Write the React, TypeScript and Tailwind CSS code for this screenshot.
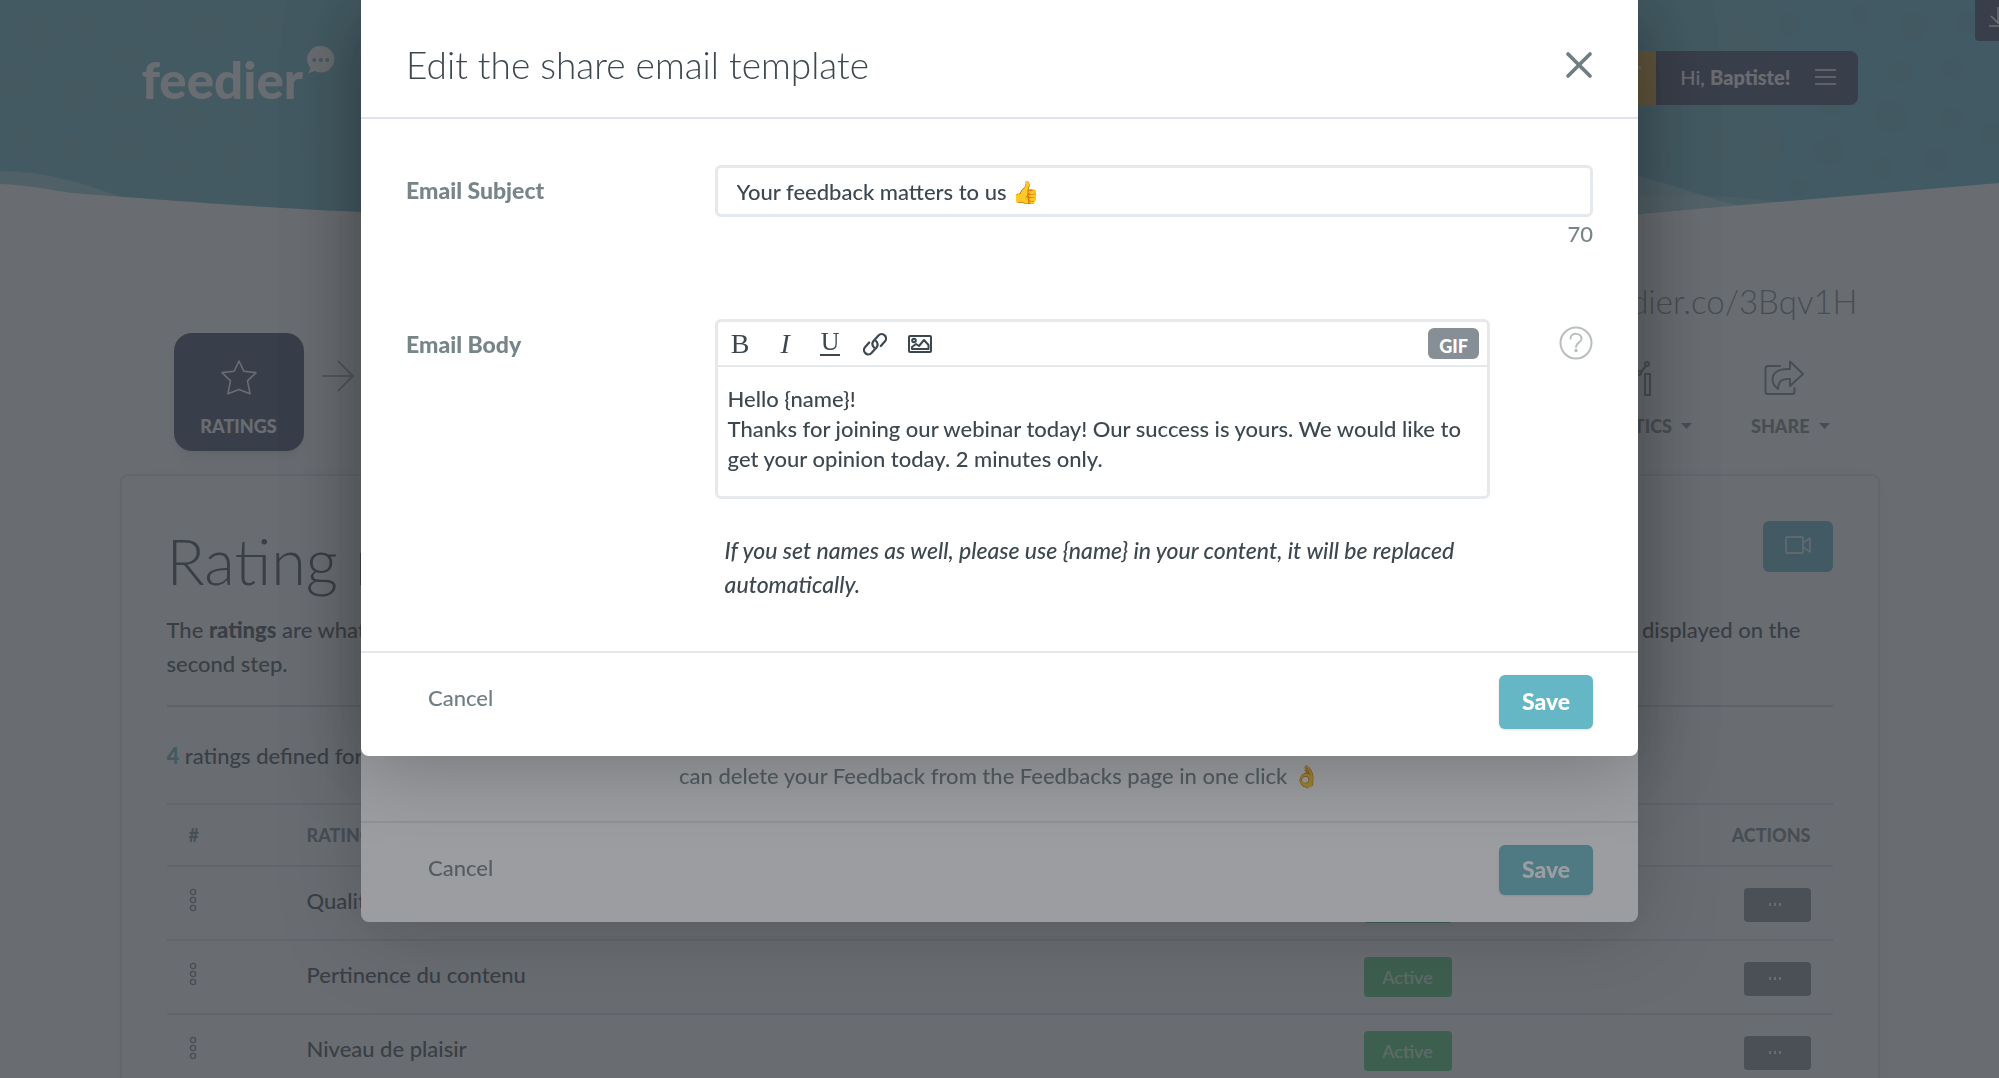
import { useState } from 'react';
import type { ReactNode } from 'react';
import { X } from 'lucide-react';

interface Rating {
  id: number;
  name: string;
}

const ratings: Rating[] = [
  { id: 1, name: 'Qualité de la présentation' },
  { id: 2, name: 'Pertinence du contenu' },
  { id: 3, name: 'Niveau de plaisir' },
  { id: 4, name: 'Organisation' },
];

// faint bubbles scattered over the header
const bubbles = [
  [38, 36, 16], [86, 26, 12], [157, 15, 10], [210, 26, 15], [270, 24, 11], [127, 58, 12],
  [14, 84, 14], [76, 92, 16], [127, 105, 12], [187, 118, 16], [247, 118, 12], [20, 143, 11],
  [72, 146, 12], [126, 150, 15], [180, 166, 11], [234, 158, 12], [305, 138, 14],
  [1742, 38, 14], [1788, 25, 12], [1859, 14, 10], [1914, 26, 14], [1968, 22, 12], [1900, 72, 12],
  [1953, 68, 11], [1830, 104, 12], [1891, 117, 17], [1951, 118, 12], [1773, 146, 12], [1829, 151, 15],
  [1882, 168, 11], [1937, 159, 12], [1720, 143, 12], [1799, 188, 10], [1660, 160, 11], [1992, 134, 12],
];

function HeaderBackground() {
  return (
    <svg
      className="absolute inset-x-0 top-0 h-[216px] w-full"
      viewBox="0 0 1999 216"
      preserveAspectRatio="none"
      aria-hidden="true"
    >
      <rect width="1999" height="216" fill="#66b7c5" />
      {bubbles.map(([x, y, r]) => (
        <circle key={`${x}-${y}`} cx={x} cy={y} r={r} fill="#8a9a90" opacity="0.1" />
      ))}
      <path d="M0 171C45 171 82 183 124 198L0 200Z" fill="#fff" opacity="0.3" />
      <path d="M1600 170C1660 176 1700 198 1742 206L1600 216Z" fill="#fff" opacity="0.3" />
      <path d="M1600 200C1680 192 1740 196 1788 203L1600 216Z" fill="#fff" opacity="0.15" />
      <path d="M0 184C30 185 50 190 72 193C140 198 230 206 360 212L1000 216L1638 214L1999 183V216H0Z" fill="#fff" />
    </svg>
  );
}

function Logo() {
  return (
    <a href="#home" className="flex items-start gap-1 text-white">
      <span className="pt-1 text-[51px] leading-[60px] font-black">feedier</span>
      <svg className="h-7 w-7" viewBox="0 0 28 28" fill="currentColor" aria-hidden="true">
        <path
          fillRule="evenodd"
          d="M14 0a13.6 13.2 0 1 1-6.300 25L1 27.500l2.600-5.500A13.400 13.200 0 0 1 14 0ZM7.300 12a2 2 0 1 0 0 4 2 2 0 0 0 0-4Zm6.500 0a2 2 0 1 0 0 4 2 2 0 0 0 0-4Zm6.500 0a2 2 0 1 0 0 4 2 2 0 0 0 0-4Z"
        />
      </svg>
    </a>
  );
}

function Caret() {
  return (
    <svg className="h-[6px] w-[11px]" viewBox="0 0 11 6" fill="currentColor" aria-hidden="true">
      <path d="M0 0h11L5.500 6z" />
    </svg>
  );
}

function Header() {
  return (
    <header className="flex h-[54px] items-center justify-between">
      <Logo />
      <div className="flex h-full overflow-hidden rounded-lg bg-[#3f4864]">
        <button type="button" aria-label="Upgrade" className="flex w-[54px] justify-center bg-[#dfa62c] pt-2 text-white">
          <svg className="h-5 w-7" viewBox="0 0 28 20" fill="none" stroke="currentColor" strokeWidth="2">
            <path d="M2 10L14 0l12 10M14 0v18" />
          </svg>
        </button>
        <button type="button" className="flex items-center gap-6 pr-[22px] pb-0.5 pl-6 text-xl text-white">
          <span>
            Hi, <strong className="font-black">Baptiste!</strong>
          </span>
          <svg className="h-[18px] w-[21px]" viewBox="0 0 21 18" stroke="currentColor" strokeWidth="1.6" aria-hidden="true">
            <path d="M0 2h21M0 9h21M0 16h21" />
          </svg>
        </button>
      </div>
    </header>
  );
}

function Steps() {
  return (
    <nav className="mt-2 flex h-[118px] items-stretch px-[22px] font-black text-[#778589] uppercase">
      <button
        type="button"
        className="ml-8 flex w-[130px] flex-col items-center rounded-[18px] bg-[#3b4864] pt-[27px] text-lg leading-6 text-white uppercase shadow-lg"
      >
        <svg className="h-9 w-9" viewBox="0 0 36 36" fill="none" stroke="currentColor" strokeWidth="1.6" strokeLinejoin="round" aria-hidden="true">
          <path d="M18 1l4.800 10.200L35 12.600l-8.500 8.200 2.600 13L18 29.500 6.900 33.800l2.600-13L1 12.600l12.200-1.400z" />
        </svg>
        <span className="mt-[18px]">Ratings</span>
      </button>
      <svg className="mt-[27px] ml-[18px] h-8 w-8 text-[#a5abae]" viewBox="0 0 32 32" fill="none" stroke="currentColor" strokeWidth="2" aria-hidden="true">
        <path d="M0 16h31M16 1l15 15-15 15" />
      </svg>
      <button type="button" className="mr-[59px] ml-auto flex flex-col items-center pt-[27px] text-lg leading-6 uppercase">
        <svg className="h-9 w-9" viewBox="0 0 36 36" fill="none" stroke="currentColor" strokeWidth="2" aria-hidden="true">
          <path d="M2 26h5v9H2zM16 23h5v12h-5zM29 14h5v21h-5zM5 19l9-8M18 11l4 3M24 13l6-7" />
          <circle cx="3" cy="21" r="2" />
          <circle cx="16" cy="10" r="2" />
          <circle cx="23" cy="13" r="2" />
          <circle cx="31" cy="4" r="2" />
        </svg>
        <span className="mt-[18px] flex items-center gap-[9px]">
          Analytics <Caret />
        </span>
      </button>
      <button type="button" className="mr-7 flex flex-col items-center pt-[27px] text-lg leading-6 uppercase">
        <svg className="mr-3 h-9 w-10" viewBox="0 0 40 36" fill="none" stroke="currentColor" strokeWidth="2" strokeLinejoin="round" strokeLinecap="round" aria-hidden="true">
          <path d="M16 6H4a2.500 2.500 0 0 0-2.500 2.500v23A2.500 2.500 0 0 0 4 34h24a2.500 2.500 0 0 0 2.500-2.500V28" />
          <path d="M26 9V1.500L39 14 26 26v-7c-7-.5-11.500 1-12 10-4-3-5.500-7-5.500-10C9 11 17 8.500 26 9z" />
        </svg>
        <span className="mt-[18px] flex items-center gap-[9px]">
          Share <Caret />
        </span>
      </button>
    </nav>
  );
}

function RatingsTable() {
  return (
    <table className="mt-7 w-full border-t-2 border-[#e3e6e9] text-left">
      <thead>
        <tr className="h-[62px] border-b-2 border-[#e3e6e9] text-lg text-[#778589] uppercase">
          <th className="w-[118px] px-[22px] font-bold">#</th>
          <th className="px-[22px] font-black">Rating</th>
          <th className="w-[300px] px-[22px] font-black">Status</th>
          <th className="w-[191px] px-[22px] text-right font-black">Actions</th>
        </tr>
      </thead>
      <tbody>
        {ratings.map((rating) => (
          <tr key={rating.id} className="h-[74px] border-b-2 border-[#e3e6e9]">
            <td className="px-[22px] pb-1.5">
              <svg className="h-6 w-2 text-[#778589]" viewBox="0 0 8 24" fill="none" stroke="currentColor" strokeWidth="1.4" aria-hidden="true">
                <circle cx="4" cy="4" r="2.600" />
                <circle cx="4" cy="12" r="2.600" />
                <circle cx="4" cy="20" r="2.600" />
              </svg>
            </td>
            <td className="px-[22px] pb-1.5">{rating.name}</td>
            <td className="px-[22px]">
              <span className="flex h-10 w-[88px] items-center justify-center rounded bg-[#4fcb78] text-lg text-white/80">
                Active
              </span>
            </td>
            <td className="px-[22px]">
              <button
                type="button"
                aria-label={`Actions for ${rating.name}`}
                className="mt-1 ml-auto flex h-[34px] w-[67px] justify-center rounded bg-[#868e96] pt-[15px] pr-[5px] text-white"
              >
                <svg className="h-[3px] w-3" viewBox="0 0 12 3" fill="currentColor" aria-hidden="true">
                  <path d="M0 0h2v3H0zM5 0h2v3H5zM10 0h2v3h-2z" />
                </svg>
              </button>
            </td>
          </tr>
        ))}
      </tbody>
    </table>
  );
}

function ModalFooter({ tall }: { tall?: boolean }) {
  return (
    <footer
      className={`${tall ? 'h-[105px]' : 'h-[101px]'} flex items-start justify-between border-t-2 border-[#e5e7ea] px-[45px] pt-[22px]`}
    >
      <button type="button" className="px-[22px] pt-1.5 leading-[34px] text-[#6f7e82]">
        Cancel
      </button>
      <button
        type="button"
        className={`${tall ? 'h-[54px]' : 'h-[50px]'} w-[94px] rounded-md bg-[#66b7c5] pb-0.5 text-[23px] font-black text-white shadow-sm`}
      >
        Save
      </button>
    </footer>
  );
}

function Modal({ label, children }: { label: string; children: ReactNode }) {
  return (
    <div className="fixed inset-0 overflow-hidden bg-[#373b41]/50">
      <section
        role="dialog"
        aria-label={label}
        className="mx-auto max-w-[1277px] rounded-b-lg bg-white shadow-[0_10px_80px_rgba(0,0,0,0.25)]"
      >
        {children}
      </section>
    </div>
  );
}

function ToolbarButton({ label, children }: { label: string; children: ReactNode }) {
  return (
    <button type="button" aria-label={label} className="flex h-8 w-[45px] items-center justify-center">
      {children}
    </button>
  );
}

function Toolbar() {
  return (
    <div className="flex h-[45px] items-center border-b-2 border-[#e5e9ec] pr-2 font-['Liberation_Serif',serif] text-[28px] leading-8">
      <ToolbarButton label="Bold">B</ToolbarButton>
      <ToolbarButton label="Italic">
        <span className="italic">I</span>
      </ToolbarButton>
      <ToolbarButton label="Underline">
        <span className="h-6 w-5 border-b-2 border-current text-[26px] leading-5">U</span>
      </ToolbarButton>
      <ToolbarButton label="Link">
        <svg className="h-6 w-6" viewBox="0 0 24 24" fill="none" stroke="currentColor" strokeWidth="2.2" strokeLinecap="round">
          <path d="M11 15.500a5 5 0 0 1-.5-6.500l5-5.500a4.300 4.300 0 0 1 6.300 6l-4 4.500" />
          <path d="M13 9a5 5 0 0 1 .5 6.500l-5 5.500a4.300 4.300 0 0 1-6.300-6l4-4.500" />
        </svg>
      </ToolbarButton>
      <ToolbarButton label="Image">
        <svg className="h-[18px] w-6" viewBox="0 0 24 18" fill="none" stroke="currentColor" strokeWidth="2" strokeLinejoin="round">
          <rect x="1" y="1" width="22" height="16" rx="1" />
          <circle cx="6" cy="5.500" r="1.800" />
          <path d="M4 14v-2l4-3 3 2 5-6 4.500 5v4z" />
        </svg>
      </ToolbarButton>
      <button
        type="button"
        className="ml-auto h-[31px] w-[51px] rounded-md bg-[#868e96] pt-1 font-[Lato,sans-serif] text-lg leading-6 font-black text-white"
      >
        GIF
      </button>
    </div>
  );
}

export default function App() {
  const [subject, setSubject] = useState('Your feedback matters to us 👍');
  const [body, setBody] = useState(
    'Hello {name}!\nThanks for joining our webinar today! Our success is yours. We would like to get your opinion today. 2 minutes only.'
  );

  return (
    <div className="relative h-screen overflow-hidden bg-white font-[Lato,sans-serif] text-[22px] font-medium text-[#3d484e]">
      <HeaderBackground />
      <button
        type="button"
        aria-label="Download"
        className="absolute top-0 right-0 flex h-[41px] w-6 overflow-hidden rounded-bl bg-[#3f4864] pt-1.5 pl-3.5 text-white"
      >
        <svg className="h-[22px] w-5 shrink-0" viewBox="0 0 20 22" fill="none" stroke="currentColor" strokeWidth="1.600" aria-hidden="true">
          <path d="M9 1v16M2 10l7 7 7-7M0 20h18" />
        </svg>
      </button>

      <main className="relative mx-auto max-w-[1760px] pt-[51px]">
        <div className="px-[22px]">
          <Header />
          <a href="#survey" className="mt-[172px] block text-right text-[33px] leading-[48px] font-light text-[#778589]">
            https://feedier.co/3Bqv1H
          </a>
        </div>
        <Steps />

        <section className="mt-[23px] rounded-lg border-2 border-[#e5e9ec] px-[45px] pt-[45px] shadow-[0_0_30px_rgba(0,0,0,0.04)]">
          <div className="flex items-start justify-between">
            <h1 className="text-[63px] leading-[80px] font-light">Rating management</h1>
            <button
              type="button"
              aria-label="Watch the video"
              className="flex h-[51px] w-[70px] items-center justify-center rounded-md bg-[#66b7c5] pb-1 text-white"
            >
              <svg className="h-[18px] w-[26px]" viewBox="0 0 26 18" fill="none" stroke="currentColor" strokeWidth="1.400" strokeLinejoin="round" aria-hidden="true">
                <rect x="1" y="1" width="17" height="16" rx="1" />
                <path d="M18 7l7-5v14l-7-5" />
              </svg>
            </button>
          </div>
          <p className="mt-3 leading-[34px]">
            <span className="flex justify-between pr-8">
              <span>
                The <strong className="font-black">ratings</strong> are what people answer first
              </span>
              <span>they are displayed on the</span>
            </span>
            second step.
          </p>
          <hr className="mt-6 border-t-2 border-[#d5d9dc]" />
          <p className="mt-8 leading-[34px]">
            <strong className="font-black text-[#66b7c5]">4</strong> ratings defined for this survey
          </p>
          <div className="pt-0.5">
            <RatingsTable />
          </div>
        </section>
      </main>

      <Modal label="Share the survey">
        <div className="flex h-[821px] items-end px-[45px] pb-7">
          <p className="ml-[23%] leading-[34px] text-[#6f7e82]">
            can delete your Feedback from the Feedbacks page in one click 👌
          </p>
        </div>
        <ModalFooter />
      </Modal>

      <Modal label="Edit the share email template">
        <header className="flex h-[119px] items-center justify-between border-b-2 border-[#e1e4ea] px-[45px] pt-3">
          <h2 className="text-[37px] leading-[48px] font-light">Edit the share email template</h2>
          <button type="button" aria-label="Close" className="-mr-2 text-[#6f7e82]">
            <X size={44} strokeWidth={2} />
          </button>
        </header>

        <div className="flex h-[532px] flex-col px-[45px] pt-[46px]">
          <div className="flex items-start">
            <label htmlFor="subject" className="w-[26%] shrink-0 pt-2 text-[23px] leading-[34px] font-black text-[#778589]">
              Email Subject
            </label>
            <div className="flex-1">
              <input
                id="subject"
                value={subject}
                onChange={(e) => setSubject(e.target.value)}
                className="block h-[52px] w-full rounded-md border-[3px] border-[#e5e9ec] px-[19px]"
              />
              <p className="text-right leading-[34px] text-[#778589]">70</p>
            </div>
          </div>

          <div className="mt-[68px] flex items-start">
            <label htmlFor="body" className="w-[26%] shrink-0 pt-2 text-[23px] leading-[34px] font-black text-[#778589]">
              Email Body
            </label>
            <div className="flex-1">
              <div className="rounded-md border-[3px] border-[#e5e9ec]">
                <Toolbar />
                <textarea
                  id="body"
                  value={body}
                  onChange={(e) => setBody(e.target.value)}
                  className="block h-[129px] w-full resize-none px-2.5 pt-[17px] leading-[30px]"
                />
              </div>
              <p className="mt-[34px] px-2.5 text-[23px] leading-[34px] italic">
                If you set names as well, please use {'{name}'} in your content, it will be replaced automatically.
              </p>
            </div>
            <button type="button" aria-label="Help" className="mt-[7px] ml-[69px] text-[#b9bfc1]">
              <svg className="h-[34px] w-[34px]" viewBox="0 0 34 34" fill="none" stroke="currentColor" strokeWidth="2" strokeLinecap="round">
                <circle cx="17" cy="17" r="15.500" />
                <path d="M11.500 12.500c.5-6.500 11.500-6 11 .5-.3 3.500-5.500 3.500-5.500 8" />
                <circle cx="17" cy="24.500" r="0.800" fill="currentColor" />
              </svg>
            </button>
          </div>
        </div>
        <ModalFooter tall />
      </Modal>
    </div>
  );
}
